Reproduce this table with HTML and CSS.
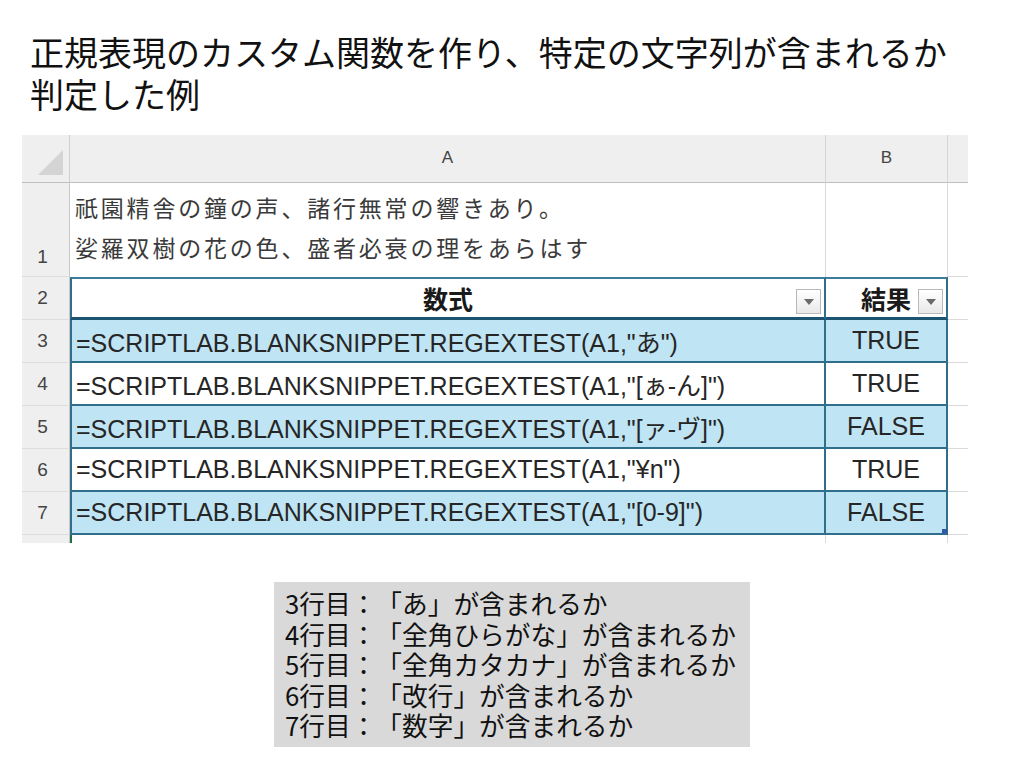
FILE: index.html
```html
<!DOCTYPE html>
<html lang="ja">
<head>
<meta charset="utf-8">
<title>正規表現のカスタム関数</title>
<link rel="stylesheet" href="styles.css">
</head>
<body>
<div class="page">
  <h1 class="title">正規表現のカスタム関数を作り、特定の文字列が含まれるか<br>判定した例</h1>

  <div class="sheet">
    <!-- column header row -->
    <div class="corner"><span class="corner-tri"></span></div>
    <div class="colhead">A</div>
    <div class="colhead">B</div>
    <div class="colhead colhead-last"></div>

    <!-- row 1 -->
    <div class="rowhead rowhead-bottom">1</div>
    <div class="cell cell-text cell-above">
      <div>祇園精舎の鐘の声、諸行無常の響きあり。</div>
      <div>娑羅双樹の花の色、盛者必衰の理をあらはす</div>
    </div>
    <div class="cell cell-above"></div>
    <div class="cell cell-extra"></div>

    <!-- row 2 (table header) -->
    <div class="rowhead">2</div>
    <div class="cell th th-a">数式<span class="filter"></span></div>
    <div class="cell th th-b">結果<span class="filter"></span></div>
    <div class="cell cell-extra"></div>

    <!-- row 3 -->
    <div class="rowhead">3</div>
    <div class="cell td td-a band">=SCRIPTLAB.BLANKSNIPPET.REGEXTEST(A1,"あ")</div>
    <div class="cell td td-b band">TRUE</div>
    <div class="cell cell-extra"></div>

    <!-- row 4 -->
    <div class="rowhead">4</div>
    <div class="cell td td-a">=SCRIPTLAB.BLANKSNIPPET.REGEXTEST(A1,"[ぁ-ん]")</div>
    <div class="cell td td-b">TRUE</div>
    <div class="cell cell-extra"></div>

    <!-- row 5 -->
    <div class="rowhead">5</div>
    <div class="cell td td-a band">=SCRIPTLAB.BLANKSNIPPET.REGEXTEST(A1,"[ァ-ヴ]")</div>
    <div class="cell td td-b band">FALSE</div>
    <div class="cell cell-extra"></div>

    <!-- row 6 -->
    <div class="rowhead">6</div>
    <div class="cell td td-a">=SCRIPTLAB.BLANKSNIPPET.REGEXTEST(A1,"¥n")</div>
    <div class="cell td td-b">TRUE</div>
    <div class="cell cell-extra"></div>

    <!-- row 7 -->
    <div class="rowhead">7</div>
    <div class="cell td td-a band">=SCRIPTLAB.BLANKSNIPPET.REGEXTEST(A1,"[0-9]")</div>
    <div class="cell td td-b band td-sel">FALSE</div>
    <div class="cell cell-extra"></div>

    <!-- row 8 (partial) -->
    <div class="rowhead rowhead-partial"></div>
    <div class="cell cell-partial cell-active"></div>
    <div class="cell cell-partial"></div>
    <div class="cell cell-partial cell-extra"></div>
  </div>

  <div class="note">
    <div>3行目：「あ」が含まれるか</div>
    <div>4行目：「全角ひらがな」が含まれるか</div>
    <div>5行目：「全角カタカナ」が含まれるか</div>
    <div>6行目：「改行」が含まれるか</div>
    <div>7行目：「数字」が含まれるか</div>
  </div>
</div>
</body>
</html>
```

FILE: styles.css
```css
* {
  box-sizing: border-box;
}

html, body {
  margin: 0;
  padding: 0;
  background: #ffffff;
}

body {
  font-family: "Noto Sans CJK JP", "Noto Sans", sans-serif;
  color: #111111;
  text-spacing-trim: space-all;
}

.page {
  width: 1024px;
  height: 768px;
  padding-top: 31px;
}

.title {
  margin: 0 0 20px 30px;
  font-size: 34px;
  line-height: 42px;
  font-weight: 400;
  color: #111111;
  letter-spacing: 0;
}

/* ---------- spreadsheet ---------- */
.sheet {
  margin-left: 22px;
  width: 946px;
  display: grid;
  grid-template-columns: 48px 756px 122px 20px;
  grid-template-rows: 48px 94px repeat(6, 43px) 8px;
  font-family: "Liberation Sans", "Noto Sans CJK JP", sans-serif;
}

.corner {
  background: #efefef;
  border-right: 1px solid #cfcfcf;
  border-bottom: 1px solid #bfbfbf;
  display: flex;
  align-items: flex-end;
  justify-content: flex-end;
  padding: 0 6px 7px 0;
}

.corner-tri {
  width: 0;
  height: 0;
  border-left: 25px solid transparent;
  border-bottom: 25px solid #d4d4d4;
}

.colhead {
  background: #efefef;
  border-right: 1px solid #d6d6d6;
  border-bottom: 1px solid #bfbfbf;
  display: flex;
  align-items: center;
  justify-content: center;
  font-family: "Liberation Sans", sans-serif;
  font-size: 17px;
  color: #444444;
  padding-bottom: 2px;
}

.colhead-last {
  border-right: none;
}

.rowhead {
  background: #efefef;
  border-right: 1px solid #c8c8c8;
  border-bottom: 1px solid #dcdcdc;
  display: flex;
  align-items: center;
  justify-content: center;
  font-family: "Liberation Sans", sans-serif;
  font-size: 19px;
  color: #444444;
  padding-right: 6px;
}

.rowhead-bottom {
  align-items: flex-end;
  padding-bottom: 8px;
}

.rowhead-partial {
  border-bottom: none;
}

.cell {
  position: relative;
  border-right: 1px solid #dadada;
  border-bottom: 1px solid #dadada;
  display: flex;
  align-items: center;
}

.cell-above {
  border-bottom: none;
}

.cell-extra {
  border-right: none;
}

.cell-partial {
  border-bottom: none;
}

.cell-active {
  border-left: 2px solid #1e6e42;
}

.cell-text {
  flex-direction: column;
  align-items: flex-start;
  justify-content: flex-end;
  padding: 0 0 10px 5px;
  font-family: "Noto Sans CJK JP", sans-serif;
  font-size: 23px;
  line-height: 40px;
  letter-spacing: 2.8px;
  color: #3a3a3a;
}

/* table */
.th,
.td {
  border-right: 2px solid #2f6f8c;
  border-bottom: 2px solid #2f6f8c;
}

.th {
  border-top: 2px solid #3d7d9a;
  border-bottom: 3px solid #1c5370;
  justify-content: center;
  font-family: "Noto Sans CJK JP", sans-serif;
  font-weight: 700;
  font-size: 25px;
  color: #1a1a1a;
  background: #ffffff;
}

.th-a,
.td-a {
  border-left: 2px solid #2f6f8c;
}

.td {
  font-size: 25px;
  color: #262626;
  background: #ffffff;
}

.td-a {
  padding-left: 4px;
  white-space: nowrap;
}

.td-b {
  justify-content: center;
}

.band {
  background: #bfe4f4;
}

.td-sel::after {
  content: "";
  position: absolute;
  right: -1px;
  bottom: -1px;
  width: 5px;
  height: 5px;
  background: #2f5aa8;
}

.filter {
  position: absolute;
  right: 3px;
  bottom: 3px;
  width: 25px;
  height: 25px;
  border: 1px solid #b8b8b8;
  background: linear-gradient(#ffffff, #e9e9e9);
  display: flex;
  align-items: center;
  justify-content: center;
}

.filter::after {
  content: "";
  width: 0;
  height: 0;
  border-left: 5px solid transparent;
  border-right: 5px solid transparent;
  border-top: 6px solid #6a6a6a;
}

/* ---------- note box ---------- */
.note {
  width: 476px;
  height: 165px;
  margin: 39px auto 0;
  background: #d9d9d9;
  padding: 6px 0 0 11px;
  font-family: "Noto Sans CJK JP", sans-serif;
  font-size: 25.7px;
  line-height: 30.5px;
  color: #111111;
}
```
